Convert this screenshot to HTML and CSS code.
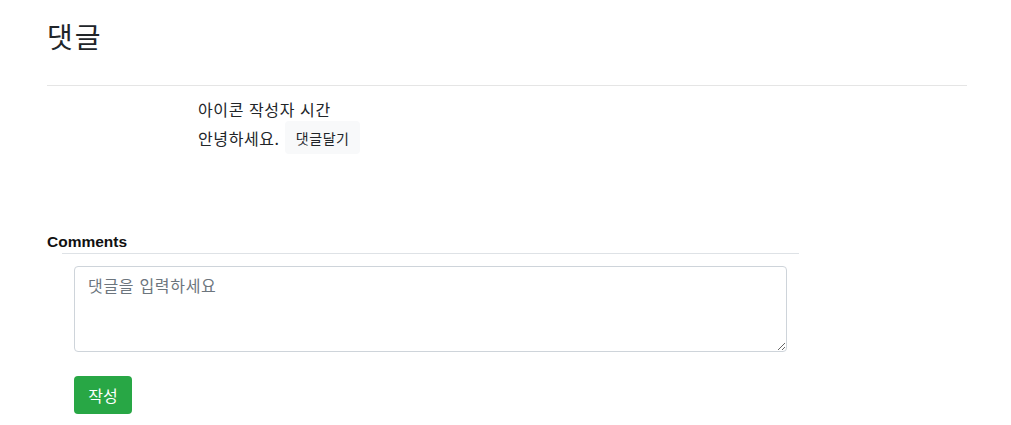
FILE: index.html
```html
<!DOCTYPE html>
<html lang="ko">
<head>
<meta charset="utf-8">
<link rel="stylesheet" href="styles.css">
</head>
<body>
<div class="page">
  <h3 class="title">댓글</h3>
  <hr class="divider">
  <div class="comment">
    <div class="meta">아이콘 작성자 시간</div>
    <div class="body-row">
      <span class="text">안녕하세요.</span>
      <button class="reply-btn" type="button">댓글달기</button>
    </div>
  </div>
  <div class="form-section">
    <div class="form-label">Comments</div>
    <div class="form-rule"></div>
    <div class="form-body">
      <textarea class="input" placeholder="댓글을 입력하세요"></textarea>
      <button class="submit-btn" type="button">작성</button>
    </div>
  </div>
</div>
</body>
</html>
```
FILE: styles.css
```css
* { box-sizing: border-box; }
html, body { margin: 0; padding: 0; background: #fff; }
body {
  font-family: "Noto Sans CJK KR", "Noto Sans", sans-serif;
  color: #212529;
  font-size: 16px;
  line-height: 1.5;
}
.page {
  padding: 15px 44px 0 47px;
  display: flex;
  flex-direction: column;
}
.title {
  margin: 0;
  font-size: 28px;
  font-weight: 400;
  line-height: 1.2;
  letter-spacing: 2px;
  height: 52px;
  padding-top: 5px;
}
.divider {
  margin: 18px 0 11px;
  border: 0;
  border-top: 1px solid #e5e5e5;
  height: 0;
}
.comment {
  padding-left: 151px;
  display: flex;
  flex-direction: column;
  letter-spacing: 0.6px;
}
.meta {
  height: 24px;
  line-height: 24px;
}
.body-row {
  display: flex;
  align-items: center;
  gap: 4px;
  height: 33px;
}
.text { line-height: 24px; }
.reply-btn {
  font-family: inherit;
  font-size: 14px;
  letter-spacing: 0.6px;
  color: #212529;
  background: #f8f9fa;
  border: 0;
  border-radius: 4px;
  height: 33px;
  padding: 0 10px 0 11px;
  margin-left: 1px;
}
.form-section {
  margin-top: 78px;
  display: flex;
  flex-direction: column;
}
.form-label {
  font-family: "Liberation Sans", Arial, sans-serif;
  font-weight: 700;
  font-size: 15.5px;
  line-height: 20px;
  color: #111;
}
.form-rule {
  margin: 1px 0 0 15px;
  width: 737px;
  border-top: 1px solid #dee2e6;
}
.form-body {
  padding-left: 27px;
  padding-top: 12px;
  display: flex;
  flex-direction: column;
  align-items: flex-start;
}
.input {
  width: 713px;
  height: 86px;
  border: 1px solid #ced4da;
  border-radius: 4px;
  padding: 6px 13px;
  font-family: inherit;
  font-size: 16px;
  line-height: 1.5;
  letter-spacing: 0.7px;
  color: #495057;
  resize: vertical;
  display: block;
}
.input::placeholder { color: #6c757d; }
.submit-btn {
  margin-top: 24px;
  font-family: inherit;
  font-size: 16px;
  color: #fff;
  background: #28a745;
  border: 0;
  border-radius: 4px;
  height: 38px;
  width: 58px;
  padding: 0;
}
```
